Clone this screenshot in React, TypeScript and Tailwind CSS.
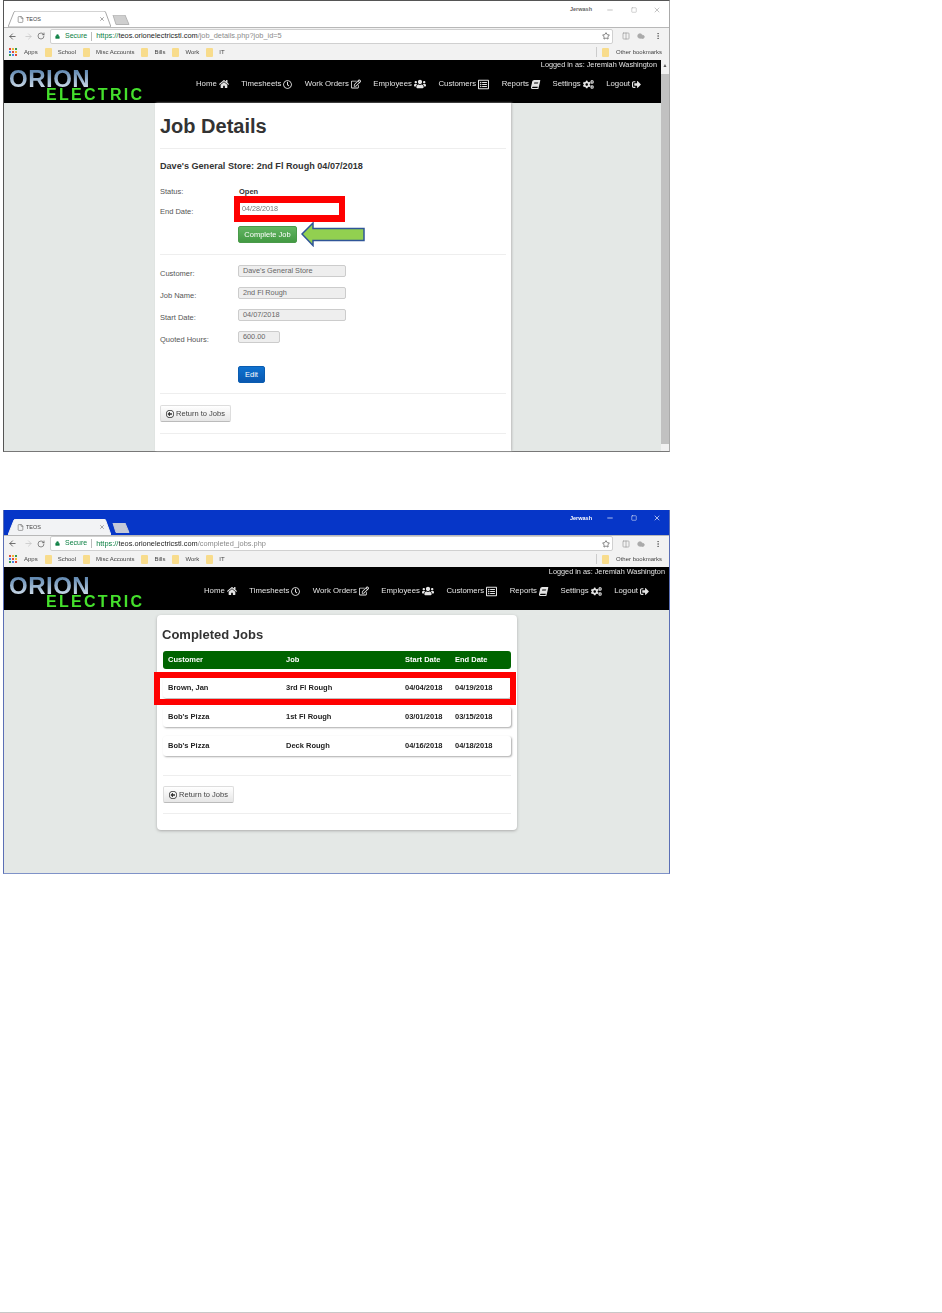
import { ArrowLeft, ArrowRight, Cloud, Columns2, EllipsisVertical, File, Lock, Minus, RotateCw, Square, Star, X } from "lucide-react";
import { FaBook, FaCogs, FaHome, FaRegClock, FaRegEdit, FaRegListAlt, FaSignOutAlt, FaUsers } from "react-icons/fa";
import { FaRegCircleLeft } from "react-icons/fa6";

const navItems = [
  { label: "Home", icon: <FaHome className="size-[10px]" /> },
  { label: "Timesheets", icon: <FaRegClock className="size-[9px]" /> },
  { label: "Work Orders", icon: <FaRegEdit className="size-[10px]" /> },
  { label: "Employees", icon: <FaUsers className="size-[12px]" /> },
  { label: "Customers", icon: <FaRegListAlt className="size-[11px]" /> },
  { label: "Reports", icon: <FaBook className="size-[9px] -skew-x-12" /> },
  { label: "Settings", icon: <FaCogs className="size-[11px]" /> },
  { label: "Logout", icon: <FaSignOutAlt className="size-[9px]" /> },
];

const bookmarks = ["School", "Misc Accounts", "Bills", "Work", "IT"];

function Folder() {
  return <span className="inline-block w-[7px] h-[9px] rounded-[1px] bg-[#f8dc8c]" />;
}

function AppsIcon() {
  const colors = ["#e0483b", "#f2b735", "#3a9a4c", "#4a86e8", "#e0483b", "#f2b735", "#3a9a4c", "#4a86e8", "#e0483b"];
  return (
    <svg width="8" height="8" viewBox="0 0 8 8">
      {colors.map((c, i) => (
        <rect key={i} x={(i % 3) * 3} y={Math.floor(i / 3) * 3} width="2" height="2" fill={c} />
      ))}
    </svg>
  );
}

function TabStrip({ active, user }: { active: boolean; user: string }) {
  return (
    <div className={`flex items-end ${active ? "h-[25px] bg-[#0636c8]" : "h-[26px] bg-white"}`}>
      <div className="relative ml-[4px] w-[103px] h-[16px]">
        <svg className="absolute inset-0" width="103" height="16" viewBox="0 0 103 16">
          <path d="M0 16 L6 1 Q6.5 0 8 0 L96 0 Q97 0 97.5 1 L103 16 Z" fill={active ? "#f2f3f5" : "#ffffff"} stroke={active ? "#f2f3f5" : "#a8a8a8"} />
        </svg>
        <div className="relative flex items-center h-full pl-[9px] pr-[6px] text-[5.5px] text-[#444]">
          <File className="size-[7px] mr-[2px] text-[#666]" />
          <span>TEOS</span>
          <X className="size-[6px] ml-auto text-[#555]" />
        </div>
      </div>
      <svg className="ml-[1px] mb-[2px]" width="18" height="10" viewBox="0 0 18 10">
        <path d="M1 0 L13 0 L17 9.5 L4 9.5 Z" fill={active ? "#c4c9d8" : "#cfcfcf"} stroke={active ? "#c4c9d8" : "#b5b5b5"} />
      </svg>
      <div className={`ml-auto h-full flex items-center pb-[9px] pr-[8px] ${active ? "text-white" : "text-[#a5a5a5]"}`}>
        <span className={`text-[5.5px] font-bold mr-[14px] ${active ? "" : "text-[#666]"}`}>{user}</span>
        <Minus className="size-[8px] mr-[17px]" />
        <Square className="size-[6px] mr-[16px]" />
        <X className="size-[8px]" />
      </div>
    </div>
  );
}

function Toolbar({ host, path, height }: { host: string; path: string; height: string }) {
  return (
    <div className={`flex items-center bg-[#f2f2f2] border-t border-[#b8b8b8] ${height}`}>
      <ArrowLeft className="ml-[4px] size-[9px] text-[#444]" />
      <ArrowRight className="ml-[7px] size-[9px] text-[#c4c4c4]" />
      <RotateCw className="ml-[4px] size-[8px] text-[#555]" />
      <div className="ml-[5px] w-[563px] h-[15px] flex items-center bg-white border border-[#d0d0d0] rounded-[2px] pl-[4px]">
        <Lock className="size-[5px] fill-current text-[#0b8043]" />
        <span className="ml-[5px] text-[7px] text-[#0b8043]">Secure</span>
        <span className="mx-[4px] h-[9px] w-px bg-[#bbb]" />
        <span className="text-[7.4px] text-[#0b8043]">https://</span>
        <span className="text-[7.4px] text-[#222]">{host}</span>
        <span className="text-[7.4px] text-[#8a8a8a]">{path}</span>
        <Star className="ml-auto mr-[2px] size-[8px] text-[#444]" />
      </div>
      <Columns2 className="ml-[9px] size-[8px] text-[#999]" />
      <Cloud className="ml-[7px] size-[8px] fill-current text-[#aaa]" />
      <EllipsisVertical className="ml-[9px] size-[8px] text-[#555]" />
    </div>
  );
}

function BookmarkBar() {
  return (
    <div className="h-[16px] flex items-center bg-[#f2f2f2] pl-[5px] pr-[7px] text-[6px] text-[#444]">
      <AppsIcon />
      <span className="ml-[7px] mr-[7px]">Apps</span>
      {bookmarks.map((b) => (
        <span key={b} className="flex items-center mr-[7px]">
          <Folder />
          <span className="ml-[6px]">{b}</span>
        </span>
      ))}
      <span className="ml-auto h-[10px] w-px bg-[#ccc]" />
      <span className="ml-[5px] flex"><Folder /></span>
      <span className="ml-[7px]">Other bookmarks</span>
    </div>
  );
}

function SiteHeader() {
  return (
    <header className="h-[43px] flex bg-black text-[#e4e4e4]">
      <div className="pl-[5px] pt-[10px] font-bold">
        <div className="h-[17px] text-[24px] leading-[17px] tracking-[0.5px] text-transparent bg-clip-text bg-gradient-to-b from-[#5f87b0] to-[#c9d8e6]">ORION</div>
        <div className="mt-[2px] ml-[37px] h-[11px] text-[16px] leading-[11px] tracking-[2.3px] text-[#45e02c]">ELECTRIC</div>
      </div>
      <div className="ml-auto flex flex-col items-end">
        <div className="h-[10px] leading-[10px] pr-[4px] text-[7.3px]">Logged in as: Jeremiah Washington</div>
        <nav className="mt-[8px] flex items-center gap-[12.5px] pr-[20px] text-[7.8px]">
          {navItems.map((n) => (
            <span key={n.label} className="flex items-center gap-[2px]">
              {n.label}
              {n.icon}
            </span>
          ))}
        </nav>
      </div>
    </header>
  );
}

function Hr({ className }: { className: string }) {
  return <div className={`h-px bg-[#eeeeee] ${className}`} />;
}

function ReturnButton({ className }: { className: string }) {
  return (
    <button className={`w-[71px] h-[17px] flex items-center justify-center gap-[2px] rounded-[2px] border border-[#ddd] border-b-[#bbb] bg-gradient-to-b from-white to-[#e6e6e6] text-[7.5px] text-[#444] ${className}`}>
      <FaRegCircleLeft className="size-[8px] text-[#333]" />
      Return to Jobs
    </button>
  );
}

function Field({ label, value, width, className }: { label: string; value: string; width: string; className: string }) {
  return (
    <div className={`flex items-center h-[12px] ${className}`}>
      <span className="w-[78px] pt-[5px] text-[7.5px] leading-none text-[#555]">{label}</span>
      <div className={`h-[12px] leading-[10px] pl-[4px] rounded-[2px] border border-[#ccc] bg-[#eeeeee] text-[7.3px] text-[#666] ${width}`}>{value}</div>
    </div>
  );
}

function JobDetails() {
  return (
    <section className="w-[356px] h-[348px] ml-[151px] bg-white shadow-[1px_0_2px_#bbb] pl-[5px] pr-[5px]">
      <h1 className="pt-[10px] h-[45px] text-[20px] leading-[26px] font-bold text-[#333]">Job Details</h1>
      <Hr className="" />
      <h2 className="mt-[11px] text-[9.1px] leading-[12px] font-bold text-[#333]">Dave's General Store: 2nd Fl Rough 04/07/2018</h2>
      <div className="mt-[15px] flex items-center h-[10px] text-[7.5px]">
        <span className="w-[79px] text-[#555]">Status:</span>
        <span className="font-bold text-[#333]">Open</span>
      </div>
      <div className="mt-[6px] flex items-center h-[12px] text-[7.5px]">
        <span className="w-[79px] pt-[5px] leading-none text-[#555]">End Date:</span>
        <div className="relative">
          <div className="w-[100px] h-[12px] leading-[12px] pl-[3px] text-[7.2px] text-[#777]">04/28/2018</div>
          <div className="absolute left-[-5px] top-[-7px] w-[111px] h-[26px] border-x-[6px] border-y-[7px] border-[#fe0000]" />
        </div>
      </div>
      <div className="relative ml-[78px] mt-[11px] h-[17px] w-[59px]">
        <button className="block w-full h-full rounded-[2px] border border-[#4a9a4a] bg-gradient-to-b from-[#62b562] to-[#439a43] text-[7.5px] text-white">Complete Job</button>
        <svg className="absolute left-[63px] top-[-4px]" width="66" height="25" viewBox="0 0 66 25">
          <path d="M1 12 L12 1 L12 6.5 L63 6.5 L63 18.5 L12 18.5 L12 23.5 Z" fill="#92d050" stroke="#2f5597" strokeWidth="1.5" />
        </svg>
      </div>
      <Hr className="mt-[11px]" />
      <Field className="mt-[10px]" label="Customer:" value="Dave's General Store" width="w-[108px]" />
      <Field className="mt-[10px]" label="Job Name:" value="2nd Fl Rough" width="w-[108px]" />
      <Field className="mt-[10px]" label="Start Date:" value="04/07/2018" width="w-[108px]" />
      <Field className="mt-[10px]" label="Quoted Hours:" value="600.00" width="w-[42px]" />
      <button className="block ml-[78px] mt-[23px] w-[27px] h-[17px] rounded-[2px] border border-[#0a5cb0] bg-gradient-to-b from-[#0f72d0] to-[#0a58b0] text-[7.5px] text-white">Edit</button>
      <Hr className="mt-[10px]" />
      <ReturnButton className="mt-[11px]" />
      <Hr className="mt-[11px]" />
    </section>
  );
}

const jobs = [
  { customer: "Brown, Jan", job: "3rd Fl Rough", start: "04/04/2018", end: "04/19/2018" },
  { customer: "Bob's Pizza", job: "1st Fl Rough", start: "03/01/2018", end: "03/15/2018" },
  { customer: "Bob's Pizza", job: "Deck Rough", start: "04/16/2018", end: "04/18/2018" },
];

function Cols({ row }: { row: { customer: string; job: string; start: string; end: string } }) {
  return (
    <>
      <span className="w-[118px]">{row.customer}</span>
      <span className="w-[119px]">{row.job}</span>
      <span className="w-[50px]">{row.start}</span>
      <span>{row.end}</span>
    </>
  );
}

function CompletedJobs() {
  return (
    <section className="mt-[5px] ml-[153px] w-[360px] h-[215px] rounded-[4px] bg-white shadow-[0_1px_3px_#aaa] px-[6px]">
      <h2 className="pt-[12px] h-[36px] -ml-px text-[13px] leading-[16px] font-bold text-[#333]">Completed Jobs</h2>
      <div className="h-[18px] flex items-center rounded-[3px] bg-[#006400] pl-[5px] text-[7.5px] font-bold text-white">
        <Cols row={{ customer: "Customer", job: "Job", start: "Start Date", end: "End Date" }} />
      </div>
      <div className="mt-[9px] flex flex-col gap-[9px]">
        {jobs.map((j, i) => (
          <div key={i} className="relative h-[20px] flex items-center rounded-[3px] bg-white shadow-[1px_1px_2px_#aaa] pl-[5px] text-[7.5px] font-bold text-[#222]">
            <Cols row={j} />
            {i === 0 && <div className="absolute left-[-9px] top-[-6px] w-[362px] h-[33px] border-[6px] border-[#fe0000]" />}
          </div>
        ))}
      </div>
      <Hr className="mt-[19px]" />
      <ReturnButton className="mt-[10px]" />
      <Hr className="mt-[10px]" />
    </section>
  );
}

export default function App() {
  return (
    <div className="h-[1313px] flex flex-col bg-white font-['Liberation_Sans',Arial,sans-serif] antialiased">
      <div className="ml-[3px] w-[667px] h-[452px] flex flex-col border-t border-l border-[#555] border-r-[#aaa] border-r border-b border-b-[#777] blur-[0.3px]">
        <TabStrip active={false} user="Jerwash" />
        <Toolbar height="h-[17px]" host="teos.orionelectricstl.com" path="/job_details.php?job_id=5" />
        <BookmarkBar />
        <div className="flex flex-1 min-h-0">
          <div className="flex-1 flex flex-col min-w-0">
            <SiteHeader />
            <div className="flex-1 bg-[#e4e8e6]">
              <JobDetails />
            </div>
          </div>
          <div className="w-[8px] flex flex-col bg-[#f1f1f1]">
            <div className="h-[14px] text-center text-[5px] leading-[10px] text-[#555]">▲</div>
            <div className="flex-1 mb-[7px] bg-[#c1c1c1]" />
          </div>
        </div>
      </div>
      <div className="mt-[58px] ml-[3px] w-[667px] h-[364px] flex flex-col border-x border-b border-x-[#5b6fb5] border-b-[#7f92c8] blur-[0.3px]">
        <TabStrip active={true} user="Jerwash" />
        <Toolbar height="h-[16px]" host="teos.orionelectricstl.com" path="/completed_jobs.php" />
        <BookmarkBar />
        <SiteHeader />
        <div className="flex-1 bg-[#e4e8e6]">
          <CompletedJobs />
        </div>
      </div>
      <div className="mt-auto h-px bg-[#c8c8c8]" />
    </div>
  );
}
